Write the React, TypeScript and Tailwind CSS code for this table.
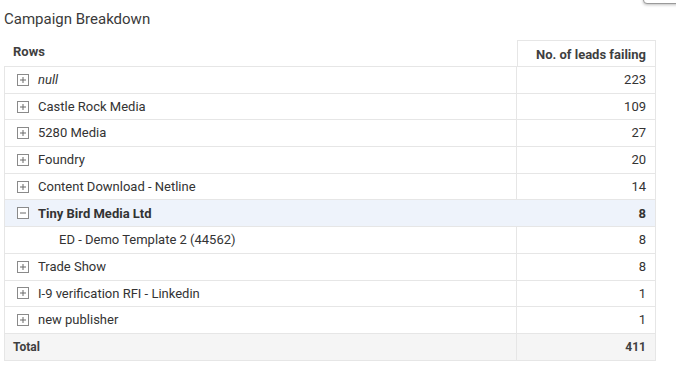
import React from 'react';

type Row = { label: string; value: number; kind: 'collapsed' | 'expanded' | 'child'; italic?: boolean };

const rows: Row[] = [
  { label: 'null', value: 223, kind: 'collapsed', italic: true },
  { label: 'Castle Rock Media', value: 109, kind: 'collapsed' },
  { label: '5280 Media', value: 27, kind: 'collapsed' },
  { label: 'Foundry', value: 20, kind: 'collapsed' },
  { label: 'Content Download - Netline', value: 14, kind: 'collapsed' },
  { label: 'Tiny Bird Media Ltd', value: 8, kind: 'expanded' },
  { label: 'ED - Demo Template 2 (44562)', value: 8, kind: 'child' },
  { label: 'Trade Show', value: 8, kind: 'collapsed' },
  { label: 'I-9 verification RFI - Linkedin', value: 1, kind: 'collapsed' },
  { label: 'new publisher', value: 1, kind: 'collapsed' },
];

function ToggleBox({ open }: { open: boolean }) {
  return (
    <svg width="12" height="12" viewBox="0 0 12 12" className="shrink-0">
      <rect x="0.5" y="0.5" width="11" height="11" fill="white" stroke="#8a8a8a" />
      <line x1="3" y1="6" x2="9" y2="6" stroke="#6b6b6b" />
      {!open && <line x1="6" y1="3" x2="6" y2="9" stroke="#6b6b6b" />}
    </svg>
  );
}

export default function App() {
  return (
    <div className="relative w-[676px] h-[375px] bg-white overflow-hidden text-[#333]" style={{ fontFamily: 'Roboto, "Liberation Sans", sans-serif' }}>
      <div className="absolute right-[-10px] top-[-30px] w-[43px] h-[34px] rounded-[4px] border border-[#9a9a9a] bg-white shadow-[0_1px_3px_rgba(0,0,0,0.25)]" />

      <h1 className="pl-[4px] pt-[9px] text-[15px] leading-[20px] text-[#3a3a3a]">Campaign Breakdown</h1>

      <div className="ml-[4px] mt-[11px] w-[652px] text-[13px]">
        <div className="flex h-[26px] text-[13px] font-bold text-[#3f3f3f]">
          <div className="w-[513px] pl-[9px] pt-[2px]">Rows</div>
          <div className="w-[139px] border-x border-t border-[#e6e6e6] pr-[9px] pt-[4px] text-right">No. of leads failing</div>
        </div>

        <div className="border-x border-t border-[#e6e6e6]">
          {rows.map((r) => {
            const hl = r.kind === 'expanded';
            return (
              <div key={r.label} className={`flex h-[26.7px] items-center border-b border-[#e6e6e6] ${hl ? 'bg-[#eef3fb]' : ''}`}>
                <div className={`w-[512px] h-full flex items-center gap-[9px] ${r.kind === 'child' ? 'pl-[54px]' : 'pl-[12px]'} ${hl ? '' : 'border-r border-[#e6e6e6]'}`}>
                  {r.kind !== 'child' && <ToggleBox open={hl} />}
                  <span className={`${r.italic ? 'italic' : ''} ${hl ? 'font-bold' : ''}`}>{r.label}</span>
                </div>
                <div className={`flex-1 pr-[9px] text-right ${hl ? 'font-bold' : ''}`}>{r.value}</div>
              </div>
            );
          })}
          <div className="flex h-[26.7px] items-center border-b border-[#e6e6e6] bg-[#f5f5f5] text-[12px] font-bold text-[#3f3f3f]">
            <div className="w-[512px] h-full flex items-center pl-[8px] border-r border-[#e6e6e6]">Total</div>
            <div className="flex-1 pr-[9px] text-right">411</div>
          </div>
        </div>
      </div>
    </div>
  );
}
